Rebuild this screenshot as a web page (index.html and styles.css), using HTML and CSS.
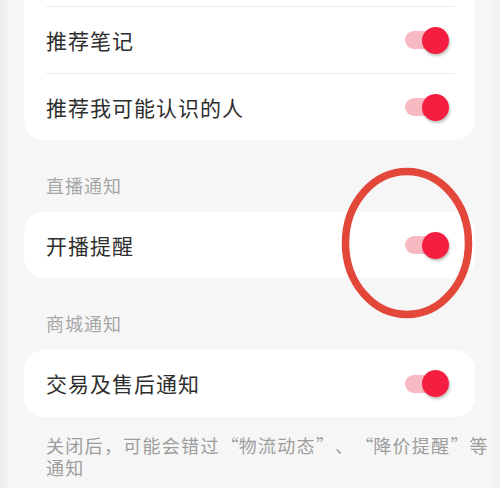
FILE: index.html
```html
<!DOCTYPE html>
<html lang="zh-Hans">
<head>
<meta charset="utf-8">
<link rel="stylesheet" href="styles.css">
</head>
<body>
<div class="page">
  <div class="card card-first">
    <div class="row"><span class="label"></span><span class="switch"><span class="track"></span><span class="thumb"></span></span></div>
    <div class="divider"></div>
    <div class="row"><span class="label">推荐笔记</span><span class="switch"><span class="track"></span><span class="thumb"></span></span></div>
    <div class="divider"></div>
    <div class="row"><span class="label">推荐我可能认识的人</span><span class="switch"><span class="track"></span><span class="thumb"></span></span></div>
  </div>

  <div class="section">直播通知</div>
  <div class="card">
    <div class="row"><span class="label">开播提醒</span><span class="switch"><span class="track"></span><span class="thumb"></span></span></div>
  </div>

  <div class="section">商城通知</div>
  <div class="card">
    <div class="row row-tall"><span class="label">交易及售后通知</span><span class="switch"><span class="track"></span><span class="thumb"></span></span></div>
  </div>

  <p class="note">关闭后，可能会错过<span class="ql">“</span>物流动态<span class="qr">”</span>、<span class="ql">“</span>降价提醒<span class="qr">”</span>等<br>通知</p>

  <svg class="circle" width="140" height="160" viewBox="0 0 140 160" aria-hidden="true">
    <ellipse cx="69" cy="77" rx="61.5" ry="71.5" fill="none" stroke="#e2473a" stroke-width="7.5"/>
  </svg>
</div>
</body>
</html>
```
FILE: styles.css
```css
html, body {
  margin: 0;
  padding: 0;
}
body {
  width: 500px;
  height: 488px;
  overflow: hidden;
  background: linear-gradient(to right, #ececec 0, #f6f6f6 10px, #f6f6f6 490px, #efefef 500px);
  font-family: "Noto Sans CJK SC", "Noto Sans", sans-serif;
}
.page {
  position: relative;
  display: flow-root;
  padding: 0 25px 0 24px;
}
.card {
  background: #fff;
  border-radius: 20px;
}
.card-first {
  margin-top: -60px;
}
.row {
  height: 66px;
  display: flex;
  align-items: center;
  justify-content: space-between;
  padding: 0 26px 0 22px;
}
.row-tall {
  height: 67px;
}
.label {
  font-size: 21px;
  letter-spacing: 1px;
  color: #2e2e2e;
  line-height: 1;
}
.divider {
  height: 1px;
  background: #ececec;
  margin: 0 20px 0 22px;
}
.switch {
  display: flex;
  align-items: center;
}
.track {
  width: 36px;
  height: 18px;
  border-radius: 9px;
  background: #f9b9c3;
}
.thumb {
  width: 27px;
  height: 27px;
  border-radius: 50%;
  margin-left: -19px;
  background: #f41f40;
  box-shadow: 1px 2px 3px rgba(0, 0, 0, 0.25);
}
.section {
  margin: 33px 0 15px 22px;
  font-size: 18px;
  letter-spacing: 1px;
  line-height: 24px;
  color: #a6a6a6;
}
.note {
  margin: 17px -17px 0 22px;
  font-size: 18px;
  letter-spacing: 1.3px;
  line-height: 22px;
  color: #9d9d9d;
}
.ql,
.qr {
  display: inline-block;
  width: 19px;
  letter-spacing: 0;
}
.ql {
  text-align: right;
}
.qr {
  text-align: left;
}
.circle {
  position: absolute;
  left: 338px;
  top: 166px;
}
```
